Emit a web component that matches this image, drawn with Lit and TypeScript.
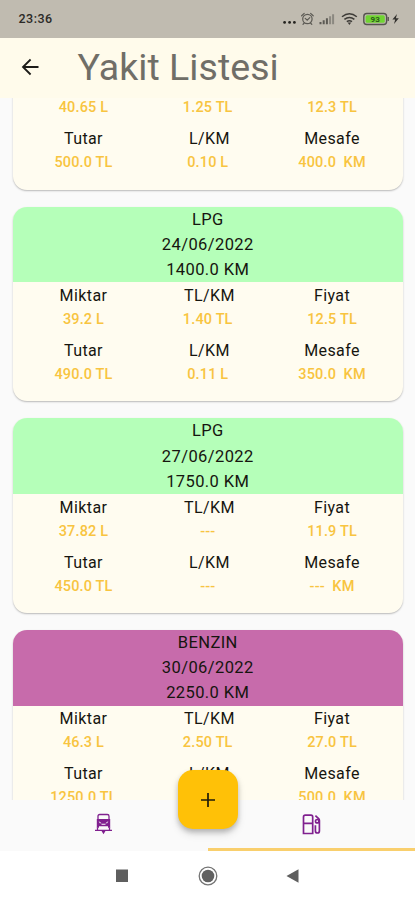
import { LitElement, html, css, svg } from "lit";
import { customElement, property } from "lit/decorators.js";
import { classMap } from "lit/directives/class-map.js";

interface Fuel {
  kind: string;
  date: string;
  odometer: string;
  amount: string;
  perKm: string;
  price: string;
  total: string;
  litres: string;
  distance: string;
}

const FUELS: Fuel[] = [
  { kind: "", date: "", odometer: "", amount: "40.65 L", perKm: "1.25 TL", price: "12.3 TL", total: "500.0 TL", litres: "0.10 L", distance: "400.0  KM" },
  { kind: "LPG", date: "24/06/2022", odometer: "1400.0 KM", amount: "39.2 L", perKm: "1.40 TL", price: "12.5 TL", total: "490.0 TL", litres: "0.11 L", distance: "350.0  KM" },
  { kind: "LPG", date: "27/06/2022", odometer: "1750.0 KM", amount: "37.82 L", perKm: "---", price: "11.9 TL", total: "450.0 TL", litres: "---", distance: "---  KM" },
  { kind: "BENZIN", date: "30/06/2022", odometer: "2250.0 KM", amount: "46.3 L", perKm: "2.50 TL", price: "27.0 TL", total: "1250.0 TL", litres: "", distance: "500.0  KM" },
];

@customElement("status-bar")
class StatusBar extends LitElement {
  static styles = css`
    :host {
      display: flex;
      align-items: center;
      justify-content: space-between;
      box-sizing: border-box;
      height: 37.5px;
      padding: 1px 14px 0 18.5px;
      background: #c0bbb0;
      flex: none;
    }
    .time {
      font: 500 12.5px/16px Roboto, sans-serif;
      letter-spacing: 0.5px;
      color: #2b2a27;
    }
    svg { display: block; }
    .level { font: 700 8px Roboto, sans-serif; fill: #2c5a1c; }
  `;
  render() {
    return html`
      <span class="time">23:36</span>
      <svg width="120" height="20" viewBox="0 0 120 20" fill="none">
        <g fill="#24231f">
          <circle cx="3.6" cy="13.4" r="1.4" /><circle cx="8.6" cy="13.4" r="1.4" /><circle cx="13.4" cy="13.4" r="1.4" />
        </g>
        <g stroke="#5c5a54" stroke-width="1.2" stroke-linecap="round">
          <circle cx="26.4" cy="10" r="4.7" />
          <path d="M20.6 6.8l2.6-2.4M32.200 6.800l-2.600-2.400M23.200 14l-1.200 1.400M29.600 14l1.200 1.400M24.200 9.400l2 1.800 2.600-2.600" />
        </g>
        <g stroke-width="2">
          <path stroke="#5c5a54" d="M39.500 15.300v-2.400M42.700 15.300v-4M45.900 15.300v-6" />
          <path stroke="#8b8880" d="M49.100 15.300v-8M52.100 15.300v-10" />
        </g>
        <g stroke="#3d3b37" stroke-width="1.500">
          <path d="M61 7.800q7.400-6.200 14.800 0" /><path d="M63.400 10.400q5-4 10 0" /><path d="M65.800 12.700q2.600-2 5.200 0" />
        </g>
        <path fill="#3d3b37" d="M66.600 13.400h3.600l-1.800 2.500z" />
        <rect x="82.800" y="4.500" width="22.800" height="11" rx="3" stroke="#55534e" stroke-width="1.400" />
        <rect x="84.600" y="6.200" width="19.200" height="7.600" rx="1.500" fill="#70d432" />
        <path stroke="#55534e" stroke-width="1.400" d="M107.200 8v4" />
        <text class="level" x="94.200" y="12.900" text-anchor="middle">93</text>
        <path fill="#33322e" d="M116 5l-4.600 5.600h2.800l-1.200 4.400 4.800-5.800h-2.900z" />
      </svg>
    `;
  }
}

@customElement("fuel-card")
class FuelCard extends LitElement {
  @property({ attribute: false }) fuel!: Fuel;
  static styles = css`
    :host {
      display: block;
      height: 194.600px;
      border-radius: 14px;
      background: #fffcf0;
      overflow: hidden;
      flex: none;
      box-shadow: 0 1px 2px rgba(0, 0, 0, 0.22), 0 1px 1px rgba(0, 0, 0, 0.05);
      color: #16150f;
    }
    .head {
      background: #b5ffb9;
      height: 75.600px;
      text-align: center;
      font: 400 16.500px/25.200px Roboto, sans-serif;
      letter-spacing: 0.4px;
    }
    .head.benzin { background: #c76bab; }
    .grid {
      display: grid;
      grid-template-columns: repeat(3, 124.300px);
      justify-content: center;
      text-align: center;
      padding-top: 0.700px;
    }
    .cell { height: 55px; }
    .label {
      font: 400 16px/25px Roboto, sans-serif;
      letter-spacing: 0.4px;
    }
    .mid .label { padding-left: 3.500px; }
    .value {
      font: 500 14.500px/24px Roboto, sans-serif;
      letter-spacing: 0.150px;
      white-space: pre;
      color: #f8c440;
    }
  `;
  private cell(label: string, value: string, mid = false) {
    return html`<div class=${classMap({ cell: true, mid })}>
      <div class="label">${label}</div>
      <div class="value">${value}</div>
    </div>`;
  }
  render() {
    const f = this.fuel;
    return html`
      <div class=${classMap({ head: true, benzin: f.kind === "BENZIN" })}>
        <div>${f.kind}</div><div>${f.date}</div><div>${f.odometer}</div>
      </div>
      <div class="grid">
        ${this.cell("Miktar", f.amount)}${this.cell("TL/KM", f.perKm, true)}${this.cell("Fiyat", f.price)}
        ${this.cell("Tutar", f.total)}${this.cell("L/KM", f.litres, true)}${this.cell("Mesafe", f.distance)}
      </div>
    `;
  }
}

const carIcon = svg`
  <path fill="none" stroke="#80208f" stroke-width="1.300" d="M4 6.500V3.200q0-1.700 1.700-1.700h7.600q1.700 0 1.700 1.700v3.300" />
  <path fill="#80208f" fill-rule="evenodd" d="M2.800 6h13.400v8.800H14v-1.600H5v1.600H2.800zM4.600 8l1.200 2.200h1.800zM14.400 8l-1.200 2.200h-1.800zM7.500 10.800h4v1h-4z" />
  <path fill="none" stroke="#80208f" stroke-width="1.300" d="M1 17.400h17M3.500 14.500v3M15.500 14.500v3" />
  <path fill="#80208f" d="M7.400 17.800h4.200l-2.100 3.400z" />`;

const pumpIcon = svg`
  <g fill="none" stroke="#80208f" stroke-width="1.700">
    <path d="M1.500 19.500V2.900q0-1.700 1.700-1.700h5.800q1.700 0 1.700 1.700v16.600zM1.500 9.300h9.200" />
    <path d="M13.400 11.300v5.700q0 2 2 2t2-2V6.500q0-1-.8-1.800l-3.200-3" />
    <circle cx="15.200" cy="7.200" r="1.700" />
  </g>`;

@customElement("app-root")
class AppRoot extends LitElement {
  static styles = css`
    :host {
      display: flex;
      flex-direction: column;
      position: relative;
      width: 415px;
      height: 900px;
      overflow: hidden;
      background: #fafafa;
      font-family: Roboto, sans-serif;
    }
    svg { display: block; }
    .appbar {
      display: flex;
      align-items: center;
      flex: none;
      height: 60px;
      box-sizing: border-box;
      padding: 0 0 2px 21px;
      background: #fffbeb;
    }
    .title {
      margin: 0 0 0 37.500px;
      font: 400 37.500px/44px Roboto, sans-serif;
      letter-spacing: 0.050px;
      color: #706e67;
    }
    .list {
      height: 702px;
      flex: none;
      overflow: hidden;
      padding: 0 12.500px 0 13px;
    }
    .items {
      display: flex;
      flex-direction: column;
      gap: 17px;
      margin-top: -102.300px;
    }
    .tabs {
      display: grid;
      grid-template-columns: 1fr 1fr;
      flex: none;
      height: 51px;
    }
    .tab {
      display: flex;
      justify-content: center;
      align-items: center;
      box-sizing: border-box;
      padding-top: 1px;
      border-bottom: 3px solid transparent;
    }
    .tab.active { border-bottom-color: #f9cf6d; }
    .system {
      display: flex;
      justify-content: center;
      flex: 1;
      background: #fff;
    }
    .fab {
      position: absolute;
      left: 178px;
      top: 770px;
      width: 60px;
      height: 59px;
      border-radius: 15px;
      background: #ffc107;
      box-shadow: 0 3px 5px rgba(0, 0, 0, 0.2), 0 5px 9px rgba(0, 0, 0, 0.12);
      display: flex;
      align-items: center;
      justify-content: center;
    }
  `;
  render() {
    return html`
      <status-bar></status-bar>
      <header class="appbar">
        <svg width="19" height="18" viewBox="0 0 19 18" fill="none" stroke="#1d1c19" stroke-width="1.800">
          <path d="M17.500 9H2.500M9.600 1.500L2 9l7.600 7.500" />
        </svg>
        <h1 class="title">Yakit Listesi</h1>
      </header>
      <main class="list">
        <div class="items">${FUELS.map((f) => html`<fuel-card .fuel=${f}></fuel-card>`)}</div>
      </main>
      <nav class="tabs">
        <div class="tab"><svg width="19" height="22" viewBox="0 0 19 22">${carIcon}</svg></div>
        <div class="tab active"><svg width="19" height="21" viewBox="0 0 19 21">${pumpIcon}</svg></div>
      </nav>
      <footer class="system">
        <svg width="415" height="49" viewBox="0 0 415 49">
          <rect x="116" y="18.500" width="12" height="12.500" fill="#5f5f5f" />
          <circle cx="208" cy="25" r="8.800" fill="none" stroke="#747474" stroke-width="1.300" />
          <circle cx="208" cy="25" r="6.300" fill="#616161" />
          <path d="M286.500 25l12-6.800v13.600z" fill="#5f5f5f" />
        </svg>
      </footer>
      <div class="fab">
        <svg width="16" height="16" viewBox="0 0 16 16" stroke="#1f1a08" stroke-width="1.700"><path d="M8 1v14M1 8h14" /></svg>
      </div>
    `;
  }
}
